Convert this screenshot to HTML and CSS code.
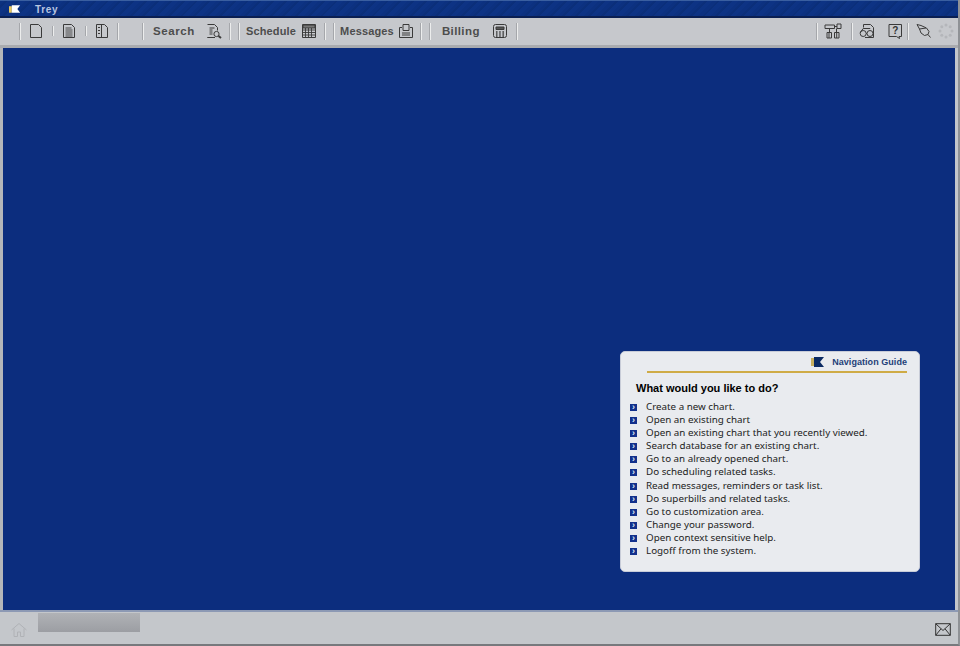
FILE: index.html
```html
<!DOCTYPE html>
<html lang="en">
<head>
<meta charset="utf-8">
<title>Trey</title>
<link rel="stylesheet" href="styles.css">
</head>
<body>
<div class="app">
  <header class="titlebar">
    <svg class="flag" viewBox="0 0 14 10" width="13" height="10"><path d="M0 2h3v7H0z" fill="#e8c860"/><path d="M3 1h9L9 5l3 4H3z" fill="#fff"/></svg>
    <span class="apptitle">Trey</span>
  </header>
  <nav class="toolbar">
    <div class="group">
      <i class="sep s-first"></i>
      <svg class="ico doc i-a" viewBox="1 0 14 16"><path d="M2.500 1.500h8l3 3v10h-11z"/></svg>
      <i class="sep faint s-a"></i>
      <svg class="ico doc i-b" viewBox="1 0 14 16"><path d="M2.500 1.500h8l3 3v10h-11z"/><path d="M4.500 5h6M4.500 7h7M4.500 9h7M4.500 11h7M4.500 13h7" stroke-width=".9"/></svg>
      <i class="sep faint s-b"></i>
      <svg class="ico doc i-c" viewBox="1 0 14 16"><path d="M2.500 1.500h8l3 3v10h-11z"/><path d="M4 4.500h2M4 7.500h2M4 10.500h2M7.500 1.500v13"/></svg>
      <i class="sep s-c"></i>
      <i class="sep s-d"></i>
      <span class="lbl l-search">Search</span>
      <svg class="ico i-search" viewBox="0 0 16 16"><path d="M1.500 1.500h7l3 3v3M9 14.500H1.500z"/><path d="M3.500 5h5M3.500 7h3M3.500 9h3M3.500 11h3"/><circle cx="10.500" cy="11" r="2.600"/><path d="M12.500 13l2.500 2" stroke-width="2"/></svg>
      <i class="sep s-e"></i>
      <i class="sep s-f"></i>
      <span class="lbl small l-sched">Schedule</span>
      <svg class="ico i-sched" viewBox="0 0 16 16"><path d="M1.500 1.500h13v13h-13z"/><path d="M1.500 7h13M1.500 9.500h13M1.500 12h13M4.500 5v10M7.500 5v10M10.500 5v10" stroke-width=".9"/><path d="M2 2h12v3H2z" fill="#777"/></svg>
      <i class="sep s-g"></i>
      <i class="sep s-h"></i>
      <span class="lbl small l-msg">Messages</span>
      <svg class="ico i-msg" viewBox="0 0 16 16"><path d="M4 4.500H1.500v10h13v-10H12"/><path d="M5 7.500V1.500h6v6zM4 10h8M4 12h8"/></svg>
      <i class="sep s-i"></i>
      <i class="sep s-j"></i>
      <span class="lbl wide l-bill">Billing</span>
      <svg class="ico i-bill" viewBox="0 0 16 16"><rect x="1.500" y="1.500" width="13" height="13" rx="2"/><path d="M4 4h8v2.500H4z" fill="#555"/><path d="M4 9h1.500M7.200 9h1.500M10.400 9H12M4 11h1.500M7.200 11h1.500M10.400 11H12M4 13h1.500M7.200 13h1.500M10.400 13H12" stroke-width="1.300"/></svg>
      <i class="sep s-k"></i>
    </div>
    <div class="group">
      <i class="sep s-l"></i>
      <svg class="ico i-net" viewBox="0 0 18 16"><path d="M1 2h9.500v3.500H1zM13 1h4v4.500h-4zM10.500 3.500H13M3 9.500h4.500v5.500H3zM10.500 9.500H15v5.500h-4.500zM5.500 5.500v4M12.500 5.500v4M5 9.500v5.500M12.700 9.500v5.500"/></svg>
      <i class="sep s-m"></i>
      <svg class="ico i-glass" viewBox="0 0 16 16"><path d="M4.500 4.500v-3h7l3 3v10H6"/><circle cx="4.200" cy="10.500" r="3"/><circle cx="11" cy="10.500" r="3"/><path d="M7.200 10.500H8M1.200 9.500l3-4h7"/></svg>
      <svg class="ico i-help" viewBox="0 0 16 16"><path d="M2 1.500h12.500v12H12l.5 2-3-2H2z"/><text x="8.200" y="11" class="qm">?</text></svg>
      <i class="sep s-n"></i>
      <svg class="ico i-tag" viewBox="0 0 16 16"><path d="M1 1.500l4 1 5.500 2.500 2.500 3.500-1 3-3.500 1-3.500-2.500L3.500 6z"/><path d="M12 11.500l2.500 3M3.500 6l6.500-1"/></svg>
      <svg class="gear" viewBox="0 0 16 16"><g fill="#b4b6ba"><circle cx="8" cy="2" r="1.500"/><circle cx="12.200" cy="3.800" r="1.500"/><circle cx="14" cy="8" r="1.500"/><circle cx="12.200" cy="12.200" r="1.500"/><circle cx="8" cy="14" r="1.500"/><circle cx="3.800" cy="12.200" r="1.500"/><circle cx="2" cy="8" r="1.500"/><circle cx="3.800" cy="3.800" r="1.500"/></g></svg>
    </div>
  </nav>
  <main class="workspace">
    <section class="guide">
      <div class="guide-head">
        <svg class="guide-flag" viewBox="0 0 14 10" width="14" height="10"><path d="M0 1h3v8H0z" fill="#c8b060"/><path d="M3 0h10L9 5l4 5H3z" fill="#0b2a63"/></svg>
        <span class="guide-name">Navigation Guide</span>
      </div>
      <h2 class="guide-q">What would you like to do?</h2>
      <ul class="guide-list">
        <li>Create a new chart.</li>
        <li>Open an existing chart</li>
        <li>Open an existing chart that you recently viewed.</li>
        <li>Search database for an existing chart.</li>
        <li>Go to an already opened chart.</li>
        <li>Do scheduling related tasks.</li>
        <li>Read messages, reminders or task list.</li>
        <li>Do superbills and related tasks.</li>
        <li>Go to customization area.</li>
        <li>Change your password.</li>
        <li>Open context sensitive help.</li>
        <li>Logoff from the system.</li>
      </ul>
    </section>
  </main>
  <footer class="statusbar">
    <svg class="home" viewBox="0 0 16 16"><path d="M.5 8L8 1.500 15.500 8M3 6.500v8h3.500V10h3v4.500H13v-8"/></svg>
    <div class="tab"></div>
    <svg class="mail" viewBox="0 0 16 13"><path d="M.7.700h14.600v11.600H.7zM.7.700L8 7.500 15.300.700M.7 12.300L6 5.800M15.300 12.300L10 5.800"/></svg>
  </footer>
</div>
</body>
</html>
```
FILE: styles.css
```css
* { box-sizing: border-box; }
html, body { margin: 0; height: 100%; overflow: hidden; }
body { background: #c3c6cb; font-family: "Liberation Sans", Arial, sans-serif; }
.app { width: 960px; height: 646px; display: flex; flex-direction: column; border-bottom: 2px solid #77797d; border-right: 2px solid #8f9296; }
.titlebar {
  height: 18px; flex: none; display: flex; align-items: center; padding-left: 9px;
  border-top: 1px solid #3a5fa0; border-bottom: 2px solid #0a1f52;
  background: repeating-linear-gradient(135deg, #0c3180 0 3px, #0b2f7a 3px 5px, #0d3384 5px 9px);
}
.flag { flex: none; }
.apptitle { margin-left: 13px; color: #b9c6e0; font-size: 10px; font-weight: bold; letter-spacing: .7px; padding-top: 1px; }
.toolbar { height: 30px; flex: none; display: flex; justify-content: space-between; align-items: flex-start; background: #c6c8cc; border-bottom: 3px solid #a9abaf; }
.group { display: flex; align-items: center; height: 26px; }
.sep { flex: none; width: 2px; height: 17px; background: #a5a7ab; border-right: 1px solid #eceded; }
.sep.faint { height: 10px; }
.ico { flex: none; fill: none; stroke: #3a3a3a; stroke-width: 1; width: 16px; height: 16px; }
.ico.doc { width: 14px; }
.qm { font-size: 10px; font-weight: bold; fill: #333; stroke: none; text-anchor: middle; }
.gear { flex: none; width: 16px; height: 16px; margin-left: 6px; margin-right: 4px; }
.lbl { flex: none; font-size: 11.500px; font-weight: bold; color: #4d4d4d; letter-spacing: .6px; }
.lbl.small { font-size: 11px; letter-spacing: .15px; }
.lbl.wide { letter-spacing: .4px; }
.s-first { margin-left: 19px; }
.i-a { margin-left: 8px; }
.s-a { margin-left: 9px; }
.i-b { margin-left: 8px; }
.s-b { margin-left: 9px; }
.i-c { margin-left: 8px; }
.s-c { margin-left: 8px; }
.s-d { margin-left: 23px; }
.l-search { margin-left: 9px; }
.i-search { margin-left: 11px; }
.s-e { margin-left: 7px; }
.s-f { margin-left: 7px; }
.l-sched { margin-left: 6px; }
.i-sched { margin-left: 5px; }
.s-g { margin-left: 7px; }
.s-h { margin-left: 7px; }
.l-msg { margin-left: 5px; }
.i-msg { margin-left: 4px; }
.s-i { margin-left: 6px; }
.s-j { margin-left: 7px; }
.l-bill { margin-left: 11px; }
.i-bill { margin-left: 12px; }
.s-k { margin-left: 8px; }
.s-l { margin-left: -1px; }
.i-net { width: 18px; margin-left: 6px; }
.s-m { margin-left: 9px; }
.i-glass { margin-left: 6px; }
.i-help { margin-left: 12px; }
.s-n { margin-left: 4px; }
.i-tag { margin-left: 7px; }
.workspace { flex: 1; display: flex; justify-content: flex-end; align-items: flex-end; background: #0c2d7e; border-left: 3px solid #b4b6ba; border-right: 3px solid #c3c6cb; padding: 0 35px 38px 0; }
.guide { width: 300px; height: 221px; background: #e9ebef; border: 1px solid #c8ccd8; border-radius: 5px; padding: 3px 12px 0 10px; }
.guide-head { display: flex; justify-content: flex-end; align-items: center; margin-left: 16px; border-bottom: 2px solid #cfab46; height: 18px; padding-bottom: 2px; }
.guide-flag { margin-right: 7px; }
.guide-name { font-size: 9px; font-weight: bold; color: #1e3f78; letter-spacing: .05px; }
.guide-q { margin: 7px 0 0 5px; font-size: 11px; line-height: 16px; font-weight: bold; color: #000; }
.guide-list { list-style: none; margin: 5px 0 0; padding: 0; }
.guide-list li { position: relative; height: 13.100px; line-height: 12px; padding-left: 15px; font-family: "Noto Sans", sans-serif; font-size: 9.800px; color: #222; }
.guide-list li::before { content: "\203A"; position: absolute; left: -1px; top: 3px; width: 7px; height: 7px; background: #12308c; color: #dfe6f5; font: bold 9px/6px "Liberation Sans", sans-serif; text-align: center; }
.statusbar { height: 34px; flex: none; position: relative; display: flex; justify-content: space-between; align-items: flex-end; background: #c4c7cb; border-top: 2px solid #8c99b4; padding: 0 7px 6px 11px; }
.home { width: 16px; height: 16px; fill: none; stroke: #b0b2b6; stroke-width: 1; }
.tab { position: absolute; left: 38px; top: 1px; width: 102px; height: 19px; background: linear-gradient(#b0b2b6, #9c9ea3); }
.mail { width: 16px; height: 13px; fill: none; stroke: #333; stroke-width: 1; margin-bottom: 2px; }
```
